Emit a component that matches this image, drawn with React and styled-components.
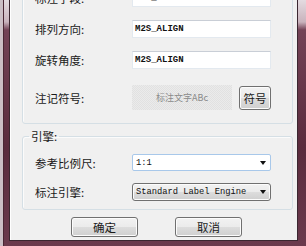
import React from "react"
import styled, { createGlobalStyle } from "styled-components"

const GlobalStyle = createGlobalStyle`
  html, body {
    margin: 0;
    padding: 0;
    width: 306px;
    height: 246px;
    overflow: hidden;
    background: #5e2f41;
  }
  * {
    box-sizing: border-box;
  }
`

const CJK = `"Noto Sans CJK SC", "Noto Sans", sans-serif`
const MONO = `"Liberation Mono", "DejaVu Sans Mono", monospace`

export default function App() {
  return (
    <>
      <GlobalStyle />
      <Frame>
        <Client>
          <Group>
            <Row>
              <Label>标注字段:</Label>
              <TextBox bold>M2S_ALIGN</TextBox>
            </Row>
            <Row>
              <Label>排列方向:</Label>
              <TextBox bold>M2S_ALIGN</TextBox>
            </Row>
            <Row>
              <Label>旋转角度:</Label>
              <TextBox bold>M2S_ALIGN</TextBox>
            </Row>
            <SymbolRow>
              <Label>注记符号:</Label>
              <Preview>标注文字ABc</Preview>
              <SymbolButton width="32px" height="24px">
                符号
              </SymbolButton>
            </SymbolRow>
          </Group>

          <FieldGroup>
            <Legend>引擎:</Legend>
            <Row>
              <Label>参考比例尺:</Label>
              <EditCombo>
                <span>1:1</span>
                <Arrow />
              </EditCombo>
            </Row>
            <Row>
              <Label>标注引擎:</Label>
              <DropCombo>
                <span>Standard Label Engine</span>
                <Arrow />
              </DropCombo>
            </Row>
          </FieldGroup>

          <ButtonRow>
            <Button width="67px" height="20px">
              确定
            </Button>
            <Button width="67px" height="20px">
              取消
            </Button>
          </ButtonRow>
        </Client>
      </Frame>
    </>
  )
}

const Frame = styled.div`
  width: 306px;
  height: 246px;
  display: flex;
  padding: 0 8px 5px 6px;
  border-left: 3px solid #cbbec5;
  background: linear-gradient(
    to bottom,
    #e4dbe0 0,
    #c9b3bd 22px,
    #734256 30px,
    #5a2b3d 60%,
    #6b3a4d 100%
  );
  box-shadow: inset 1px 0 0 #4a2634;
`

const Client = styled.div`
  flex: 1;
  display: flex;
  flex-direction: column;
  overflow: hidden;
  background: #f0f0f0;
  border: 1px solid #3a2630;
  border-top: none;
  box-shadow: inset 1px 0 0 #ffffff;
`

const Group = styled.div`
  display: flex;
  flex-direction: column;
  gap: 13px;
  margin: -20px 4px 0 12px;
  padding: 8px 20px 13px 12px;
  border: 1px solid #d5dfe5;
  border-radius: 3px;
  box-shadow: inset 1px 1px 0 #fbfbfb;
`

const Row = styled.div`
  display: flex;
  align-items: center;
`

const SymbolRow = styled(Row)`
  margin-top: 3px;
`

const Label = styled.span`
  width: 97px;
  flex: none;
  font-family: ${CJK};
  font-size: 11.5px;
  line-height: 14px;
  color: #1a1a1a;
`

const TextBox = styled.div`
  width: 139px;
  height: 18px;
  display: flex;
  align-items: center;
  padding-left: 2px;
  background: #fff;
  border: 1px solid #e3e9ef;
  border-top-color: #c9ced6;
  font-family: ${MONO};
  font-size: 9px;
  font-weight: ${props => (props.bold ? "bold" : "normal")};
  color: #111;
`

const Preview = styled.div`
  width: 100px;
  height: 25px;
  display: flex;
  align-items: center;
  justify-content: center;
  background: repeating-conic-gradient(#e1e1e1 0 25%, #ebebeb 0 50%) 0 0 / 2px
    2px;
  font-family: ${CJK};
  font-size: 9px;
  color: #8a8a8a;
`

const Button = styled.div`
  width: ${props => props.width};
  height: ${props => props.height};
  display: flex;
  align-items: center;
  justify-content: center;
  border: 1px solid #707070;
  border-radius: 3px;
  background: linear-gradient(
    to bottom,
    #f2f2f2 0,
    #ebebeb 49%,
    #dddddd 50%,
    #cfcfcf 100%
  );
  box-shadow: inset 0 0 0 1px #fcfcfc;
  font-family: ${CJK};
  font-size: 11.5px;
  line-height: 14px;
  color: #1a1a1a;
`

const SymbolButton = styled(Button)`
  margin-left: 7px;
`

const FieldGroup = styled.fieldset`
  margin: 5px 4px 0 12px;
  padding: 11px 20px 8px 12px;
  min-width: 0;
  display: flex;
  flex-direction: column;
  gap: 12px;
  border: 1px solid #d5dfe5;
  border-radius: 3px;
  box-shadow: inset 1px 1px 0 #fbfbfb;
`

const Legend = styled.legend`
  margin-left: -6px;
  padding: 0 2px;
  font-family: ${CJK};
  font-size: 11.5px;
  line-height: 14px;
  color: #1a1a1a;
`

const ComboBase = styled.div`
  width: 139px;
  height: 18px;
  display: flex;
  align-items: center;
  justify-content: space-between;
  padding: 0 4px 0 3px;
  font-family: ${MONO};
  font-size: 8.75px;
  color: #111;
  white-space: nowrap;
`

const EditCombo = styled(ComboBase)`
  height: 17px;
  background: #fff;
  border: 1px solid #a8c8ea;
  border-radius: 2px;
`

const DropCombo = styled(ComboBase)`
  border: 1px solid #707070;
  border-radius: 3px;
  background: linear-gradient(
    to bottom,
    #f2f2f2 0,
    #ebebeb 49%,
    #dddddd 50%,
    #cfcfcf 100%
  );
  box-shadow: inset 0 0 0 1px #fcfcfc;
`

const Arrow = styled.i`
  width: 0;
  height: 0;
  border-left: 3.5px solid transparent;
  border-right: 3.5px solid transparent;
  border-top: 4px solid #111;
`

const ButtonRow = styled.div`
  display: flex;
  justify-content: center;
  gap: 37px;
  margin-top: 7px;
  padding-left: 6px;
`
